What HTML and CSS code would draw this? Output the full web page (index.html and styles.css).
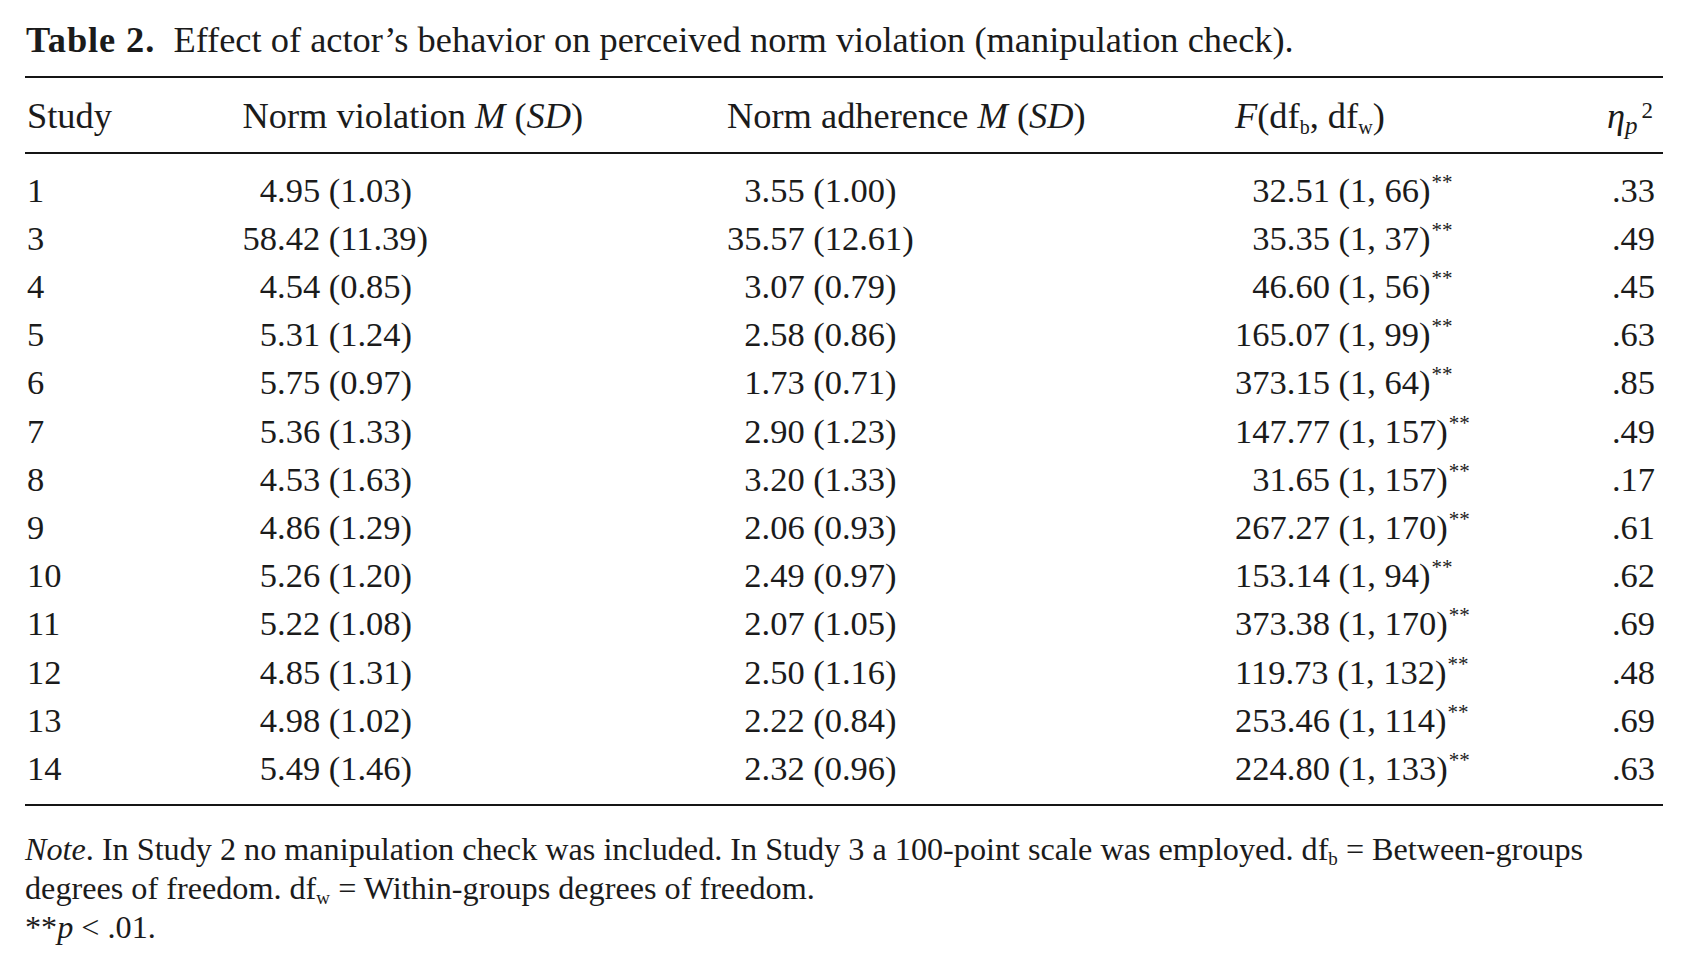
FILE: index.html
```html
<!DOCTYPE html>
<html lang="en">
<head>
<meta charset="utf-8">
<title>Table 2</title>
<link rel="stylesheet" href="styles.css">
</head>
<body>
<div class="page">
  <h1 class="caption"><b class="label">Table 2.</b>&nbsp; Effect of actor’s behavior on perceived norm violation (manipulation check).</h1>
  <table class="data">
    <colgroup>
      <col class="c-study">
      <col class="c-viol">
      <col class="c-adh">
      <col class="c-f">
      <col class="c-eta">
    </colgroup>
    <thead>
      <tr>
        <th class="h-study">Study</th>
        <th class="h-viol">Norm violation <i>M</i> (<i>SD</i>)</th>
        <th class="h-adh">Norm adherence <i>M</i> (<i>SD</i>)</th>
        <th class="h-f"><i>F</i>(df<sub>b</sub>, df<sub>w</sub>)</th>
        <th class="h-eta"><i>η</i><sub class="sub-p"><i>p</i></sub><sup class="sup-2">2</sup></th>
      </tr>
    </thead>
    <tbody>
      <tr><td>1</td><td class="d1">4.95 (1.03)</td><td class="d1">3.55 (1.00)</td><td class="d1">32.51 (1, 66)<sup>**</sup></td><td class="eta">.33</td></tr>
      <tr><td>3</td><td>58.42 (11.39)</td><td>35.57 (12.61)</td><td class="d1">35.35 (1, 37)<sup>**</sup></td><td class="eta">.49</td></tr>
      <tr><td>4</td><td class="d1">4.54 (0.85)</td><td class="d1">3.07 (0.79)</td><td class="d1">46.60 (1, 56)<sup>**</sup></td><td class="eta">.45</td></tr>
      <tr><td>5</td><td class="d1">5.31 (1.24)</td><td class="d1">2.58 (0.86)</td><td>165.07 (1, 99)<sup>**</sup></td><td class="eta">.63</td></tr>
      <tr><td>6</td><td class="d1">5.75 (0.97)</td><td class="d1">1.73 (0.71)</td><td>373.15 (1, 64)<sup>**</sup></td><td class="eta">.85</td></tr>
      <tr><td>7</td><td class="d1">5.36 (1.33)</td><td class="d1">2.90 (1.23)</td><td>147.77 (1, 157)<sup>**</sup></td><td class="eta">.49</td></tr>
      <tr><td>8</td><td class="d1">4.53 (1.63)</td><td class="d1">3.20 (1.33)</td><td class="d1">31.65 (1, 157)<sup>**</sup></td><td class="eta">.17</td></tr>
      <tr><td>9</td><td class="d1">4.86 (1.29)</td><td class="d1">2.06 (0.93)</td><td>267.27 (1, 170)<sup>**</sup></td><td class="eta">.61</td></tr>
      <tr><td>10</td><td class="d1">5.26 (1.20)</td><td class="d1">2.49 (0.97)</td><td>153.14 (1, 94)<sup>**</sup></td><td class="eta">.62</td></tr>
      <tr><td>11</td><td class="d1">5.22 (1.08)</td><td class="d1">2.07 (1.05)</td><td>373.38 (1, 170)<sup>**</sup></td><td class="eta">.69</td></tr>
      <tr><td>12</td><td class="d1">4.85 (1.31)</td><td class="d1">2.50 (1.16)</td><td>119.73 (1, 132)<sup>**</sup></td><td class="eta">.48</td></tr>
      <tr><td>13</td><td class="d1">4.98 (1.02)</td><td class="d1">2.22 (0.84)</td><td>253.46 (1, 114)<sup>**</sup></td><td class="eta">.69</td></tr>
      <tr><td>14</td><td class="d1">5.49 (1.46)</td><td class="d1">2.32 (0.96)</td><td>224.80 (1, 133)<sup>**</sup></td><td class="eta">.63</td></tr>
    </tbody>
  </table>
  <div class="note">
    <p><i>Note</i>. In Study 2 no manipulation check was included. In Study 3 a 100-point scale was employed. df<sub>b</sub> = Between-groups degrees of freedom. df<sub>w</sub> = Within-groups degrees of freedom.</p>
    <p>**<i>p</i> &lt; .01.</p>
  </div>
</div>
</body>
</html>
```

FILE: styles.css
```css
html, body {
  margin: 0;
  padding: 0;
  background: #ffffff;
}

body {
  font-family: "Liberation Serif", "Times New Roman", serif;
  color: #1b1b1b;
}

.page {
  padding: 20px 0 0 25px;
  width: 1638px;
}

.caption {
  margin: 0 0 16px 0;
  padding-left: 1px;
  font-size: 36.4px;
  font-weight: normal;
  line-height: 40px;
  height: 40px;
  white-space: nowrap;
}

.caption .label {
  font-weight: bold;
  letter-spacing: 0.9px;
}

.data {
  width: 1638px;
  border-collapse: separate;
  border-spacing: 0;
  table-layout: fixed;
}

.c-study { width: 217.5px; }
.c-viol  { width: 484.5px; }
.c-adh   { width: 508px; }
.c-f     { width: 325px; }
.c-eta   { width: 103px; }

.data th {
  font-size: 36.4px;
  font-weight: normal;
  line-height: 48px;
  text-align: left;
  padding: 14px 0 12px 0;
  border-top: 2px solid #151515;
  border-bottom: 2px solid #151515;
  white-space: nowrap;
}

.data th.h-study { padding-left: 2px; }
.data th.h-eta   { text-align: right; padding-right: 10px; }

.data td {
  font-size: 34.5px;
  line-height: 48.17px;
  padding: 0;
  white-space: nowrap;
  text-align: left;
}

.data td:first-child { padding-left: 2px; }

.data td.d1 { padding-left: 0.5em; }

.data td.eta {
  text-align: right;
  padding-right: 8px;
}

.data tbody tr:first-child td { padding-top: 11.8px; }

.data tbody tr:last-child td {
  padding-bottom: 12px;
  border-bottom: 2px solid #151515;
}

sub, sup {
  line-height: 0;
  font-size: 20px;
}

sub { vertical-align: -6px; }

.data td sup {
  font-size: 21px;
  vertical-align: 13px;
  padding-left: 1px;
}

.data th .sub-p {
  font-size: 25px;
  vertical-align: -6px;
}

.data th .sup-2 {
  font-size: 23px;
  vertical-align: 10px;
  padding-left: 4px;
}

.note {
  margin-top: 24px;
  font-size: 32.2px;
  line-height: 38.8px;
}

.note p {
  margin: 0;
  width: 1630px;
}

.note sub {
  font-size: 19px;
  vertical-align: -5px;
}
```
